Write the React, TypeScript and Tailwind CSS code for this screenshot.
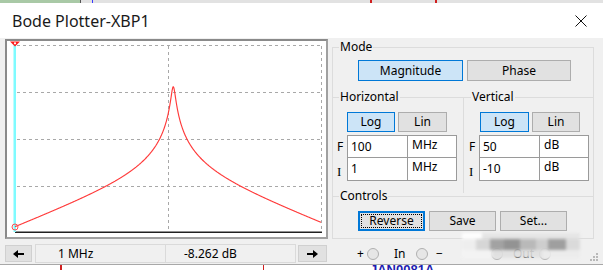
import React from "react";

const Q2 = 272;
function yAt(x: number) {
  const u = (x - 15) / 153.5;
  const r = Math.pow(10, u - 1.031);
  const d = r - 1 / r;
  const db = 36.6 - 10 * Math.log10(1 + Q2 * d * d);
  return 45 + (50 - db) * (187 / 60);
}
function curvePath() {
  const xs: number[] = [];
  for (let x = 15; x <= 321; x += 0.25) xs.push(x);
  xs.push(15 + 1.031 * 153.5);
  xs.sort((a, b) => a - b);
  return xs
    .map((x, i) => `${i ? "L" : "M"}${x.toFixed(2)},${yAt(x).toFixed(2)}`)
    .join("");
}

const btn =
  "flex items-center justify-center bg-[#e1e1e1] border border-[#adadad] leading-none";
const btnOn =
  "flex items-center justify-center bg-[#cce4f7] border border-[#0078d7] leading-none";

function Radio() {
  return (
    <span className="block w-[12px] h-[12px] rounded-full border-[1.5px] border-[#b0b0b0] bg-[#e6e6e6]" />
  );
}

function Arrow({ dir }: { dir: "l" | "r" }) {
  return (
    <svg width="11" height="8" viewBox="0 0 11 8">
      <path
        d={dir === "l" ? "M0 4 L5 0 L5 3 L11 3 L11 5 L5 5 L5 8 Z" : "M11 4 L6 0 L6 3 L0 3 L0 5 L6 5 L6 8 Z"}
        fill="#000"
      />
    </svg>
  );
}

function Fields({ v1, u1, v2, u2, left }: { v1: string; u1: string; v2: string; u2: string; left: string }) {
  const cell = "h-[23px] bg-white border border-[#9a9a9a] text-[12px]";
  return (
    <div className={`flex ${left}`}>
      <div className="w-[10px] flex flex-col">
        <div className="h-[23px] flex items-center text-[12px]">F</div>
        <div className="h-[23px] flex items-center pt-[4px] font-['Liberation_Serif',serif] text-[13px]">I</div>
      </div>
      <div className="flex flex-col">
        <div className="flex">
          <div className={`${cell} w-[61px] flex items-center pl-[3px]`}>{v1}</div>
          <div className={`${cell} border-l-0 w-[49px] pl-[4px] pt-[1px] leading-[16px]`}>{u1}</div>
        </div>
        <div className="flex">
          <div className={`${cell} border-t-0 w-[61px] flex items-center pl-[3px]`}>{v2}</div>
          <div className={`${cell} border-t-0 border-l-0 w-[49px] pl-[4px] pt-[1px] leading-[16px]`}>{u2}</div>
        </div>
      </div>
    </div>
  );
}

export default function App() {
  const path = curvePath();
  return (
    <div className="w-[603px] h-[270px] overflow-hidden bg-white flex flex-col relative font-['Noto_Sans',sans-serif] text-[12px] text-black">
      {/* strip of app behind */}
      <div className="h-[3px] shrink-0 flex bg-[#e2e2e2]">
        <div className="w-[80px] bg-[#a9c9a6]" />
        <div className="w-[1px] bg-[#555]" />
        <div className="w-[11px]" />
        <div className="w-[1px] bg-[#3b3bff]" />
        <div className="w-[277px]" />
        <div className="w-[2px] bg-[#d02020]" />
        <div className="w-[63px]" />
        <div className="w-[2px] bg-[#d02020]" />
      </div>
      {/* title bar */}
      <div className="h-[35px] shrink-0 flex items-center justify-between pl-[12px] pr-[16px] bg-white">
        <span className="text-[16px] leading-none text-[#1a1a1a]">Bode Plotter-XBP1</span>
        <svg width="12" height="12" viewBox="0 0 12 12">
          <path d="M0.5 0.5 L11.5 11.5 M11.5 0.5 L0.5 11.5" stroke="#111" strokeWidth="1" />
        </svg>
      </div>
      {/* body */}
      <div className="h-[226px] shrink-0 bg-[#f0f0f0] flex pl-[5px] relative">
        {/* left column */}
        <div className="w-[323px] flex flex-col pt-[1px]">
          <div className="h-[200px] border-2 border-[#a0a0a0] border-t-[#8a8a8a] border-l-[#8a8a8a] bg-white">
            <svg width="319" height="196" viewBox="7 41 319 196" className="block">
              <g stroke="#a8a8a8" strokeWidth="1" strokeDasharray="3 3" fill="none">
                <line x1="17" y1="45.5" x2="322" y2="45.5" />
                <line x1="17" y1="92.5" x2="322" y2="92.5" />
                <line x1="17" y1="139.5" x2="322" y2="139.5" />
                <line x1="17" y1="186.5" x2="322" y2="186.5" />
                <line x1="168.5" y1="46" x2="168.5" y2="232" />
                <line x1="321.5" y1="46" x2="321.5" y2="232" />
              </g>
              <rect x="15" y="231.5" width="307" height="1.5" fill="#222" />
              <rect x="13.5" y="44" width="2.5" height="188" fill="#7ffbff" />
              <path d={path} stroke="#ff3a3a" strokeWidth="1.15" fill="none" strokeLinejoin="round" />
              <polygon points="10,41.5 20,41.5 15,46.5" fill="#ff1a1a" />
              <circle cx="15" cy="43.3" r="1.1" fill="#fff" />
              <circle cx="15" cy="227" r="3" stroke="#ff5050" strokeWidth="1" fill="none" />
            </svg>
          </div>
          <div className="mt-[5px] h-[19px] flex items-center">
            <div className={`${btn} w-[27px] h-[17px] border-[#d0d0d0]`}>
              <Arrow dir="l" />
            </div>
            <div className="ml-[3px] w-[131px] h-[19px] border border-[#dadada] flex items-center pl-[22px] text-[12px]">
              1 MHz
            </div>
            <div className="w-[130px] h-[19px] border border-l-0 border-[#dadada] flex items-center pl-[18px] text-[12px]">
              -8.262 dB
            </div>
            <div className={`${btn} ml-[2px] w-[29px] h-[17px] border-[#d0d0d0]`}>
              <Arrow dir="r" />
            </div>
          </div>
        </div>
        {/* right column */}
        <div className="ml-[4px] w-[262px] flex flex-col pt-[1px]">
          <fieldset className="border border-[#dcdcdc] pb-[7px]">
            <legend className="ml-[6px] px-[1px] leading-[16px]">Mode</legend>
            <div className="flex pl-[25px] mt-[5px] gap-[4px]">
              <div className={`${btnOn} w-[105px] h-[21px]`}>Magnitude</div>
              <div className={`${btn} w-[104px] h-[21px]`}>Phase</div>
            </div>
            <div className="flex mt-[8px]">
              <fieldset className="w-[131px] border-t border-r border-[#dcdcdc] pb-[12px]">
                <legend className="ml-[6px] px-[1px] leading-[16px]">Horizontal</legend>
                <div className="flex pl-[14px] mt-[7px] gap-[3px]">
                  <div className={`${btnOn} w-[48px] h-[20px]`}>Log</div>
                  <div className={`${btn} w-[49px] h-[20px]`}>Lin</div>
                </div>
                <div className="mt-[3px]">
                  <Fields left="pl-[4px]" v1="100" u1="MHz" v2="1" u2="MHz" />
                </div>
              </fieldset>
              <fieldset className="flex-1 border-t border-[#dcdcdc] pb-[12px]">
                <legend className="ml-[7px] px-[1px] leading-[16px]">Vertical</legend>
                <div className="flex pl-[16px] mt-[7px] gap-[3px]">
                  <div className={`${btnOn} w-[49px] h-[20px]`}>Log</div>
                  <div className={`${btn} w-[48px] h-[20px]`}>Lin</div>
                </div>
                <div className="mt-[3px]">
                  <Fields left="pl-[5px]" v1="50" u1=" dB" v2="-10" u2=" dB" />
                </div>
              </fieldset>
            </div>
            <fieldset className="-mt-[5px] border-t border-[#dcdcdc]">
              <legend className="ml-[6px] px-[1px] leading-[16px]">Controls</legend>
              <div className="flex pl-[25px] mt-[7px] gap-[4px]">
                <div className="w-[67px] h-[20px] bg-[#e1e1e1] border-2 border-[#0078d7] p-[1px]">
                  <div className="w-full h-full border border-dotted border-black flex items-center justify-center leading-none">
                    Reverse
                  </div>
                </div>
                <div className={`${btn} w-[67px] h-[20px]`}>Save</div>
                <div className={`${btn} w-[67px] h-[20px]`}>Set...</div>
              </div>
            </fieldset>
          </fieldset>
          <div className="mt-[7px] h-[16px] flex items-center">
            <span className="ml-[25px] w-[10px] leading-none">+</span>
            <Radio />
            <span className="ml-[15px] w-[22px] leading-none">In</span>
            <Radio />
            <span className="ml-[8px] w-[55px] leading-none">−</span>
            <Radio />
            <span className="ml-[10px] w-[26px] leading-none">Out</span>
            <Radio />
          </div>
        </div>
        {/* resize grip */}
        <svg className="absolute right-[5px] bottom-[1px]" width="10" height="10" viewBox="0 0 10 10">
          <g fill="#b8b8b8">
            <rect x="8" y="0" width="2" height="2" />
            <rect x="5" y="3" width="2" height="2" />
            <rect x="8" y="3" width="2" height="2" />
            <rect x="2" y="6" width="2" height="2" />
            <rect x="5" y="6" width="2" height="2" />
            <rect x="8" y="6" width="2" height="2" />
          </g>
        </svg>
        {/* blurred watermark overlay */}
        <div className="absolute left-[462px] top-[195px] w-[118px] h-[25px] blur-[1.5px] opacity-90 flex flex-col">
          <div className="h-[6px] flex">
            <div className="w-[20px] bg-[#ffffff]" />
            <div className="w-[98px] bg-[#e4e4e4]" />
          </div>
          <div className="h-[11px] flex">
            <div className="w-[14px] bg-[#eeeeee]" />
            <div className="w-[14px] bg-[#d4d4d4]" />
            <div className="w-[14px] bg-[#9a9a9a]" />
            <div className="w-[16px] bg-[#8a8a8a]" />
            <div className="w-[16px] bg-[#b4b4b4]" />
            <div className="w-[12px] bg-[#cbcbcb]" />
            <div className="w-[18px] bg-[#979797]" />
            <div className="w-[14px] bg-[#d8d8d8]" />
          </div>
          <div className="h-[8px] flex">
            <div className="w-[30px] bg-[#f4f4f4]" />
            <div className="w-[50px] bg-[#e0e0e0]" />
            <div className="w-[38px] bg-[#ececec]" />
          </div>
        </div>
      </div>
      {/* app behind, bottom */}
      <div className="flex-1 border-t border-[#a8a8a8] bg-white relative overflow-hidden flex items-start">
        <div className="ml-[60px] w-[2px] h-[6px] bg-[#d02020]" />
        <div className="ml-[201px] w-[1px] h-[6px] bg-[#d02020]" />
        <span className="ml-[106px] -mt-[1px] text-[13px] leading-[12px] font-bold text-[#1c1cb0] font-['Liberation_Sans',sans-serif]">
          JAN0081A
        </span>
      </div>
    </div>
  );
}
